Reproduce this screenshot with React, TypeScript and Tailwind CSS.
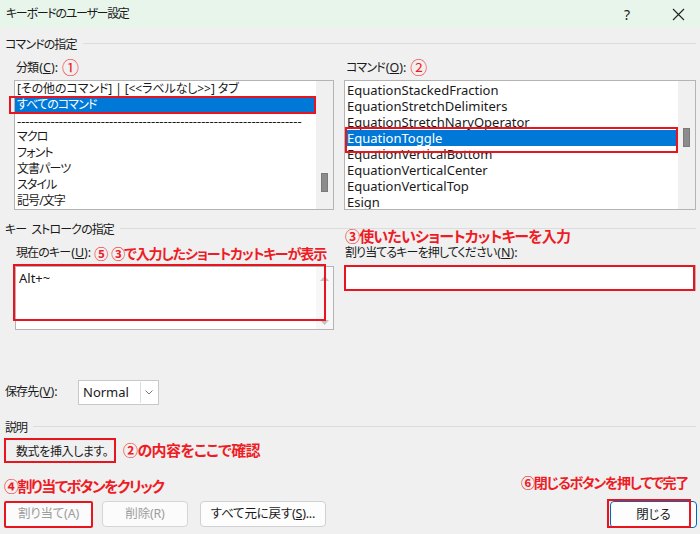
import React from "react";

const RED = "#e8141e";
const JP = "text-[12px] tracking-[-0.9px]";
const LAT = "text-[12.5px] tracking-normal";

const leftItems = [
  "[その他のコマンド] | [<<ラベルなし>>] タブ",
  "すべてのコマンド",
  "--------------------------------------------------------------------",
  "マクロ",
  "フォント",
  "文書パーツ",
  "スタイル",
  "記号/文字",
];

const rightItems = [
  "EquationStackedFraction",
  "EquationStretchDelimiters",
  "EquationStretchNaryOperator",
  "EquationToggle",
  "EquationVerticalBottom",
  "EquationVerticalCenter",
  "EquationVerticalTop",
  "Esign",
];

const Key = ({ k }: { k: string }) => (
  <span className={LAT + " ml-[1px]"}>
    (<span className="underline">{k}</span>):
  </span>
);

const GroupHeader = ({ label }: { label: React.ReactNode }) => (
  <div className="flex h-[16px] items-center">
    <span className={JP + " leading-[16px]"}>{label}</span>
    <div className="ml-[6px] mt-[-3px] h-px flex-1 bg-[#dcdcdc]" />
  </div>
);

const ListItem = ({ text, selected, cls }: { text: string; selected?: boolean; cls: string }) => (
  <div
    className={
      "h-[16px] overflow-hidden whitespace-nowrap pl-[2px] leading-[16px] " +
      cls +
      " " +
      (selected ? "mr-[2px] bg-[#0078d7] text-white" : "text-[#1a1a1a]")
    }
  >
    {text}
  </div>
);

const Annotation = ({ text, className }: { text: string; className?: string }) => (
  <span className={"whitespace-nowrap font-bold text-[#ee1c25] " + (className ?? "")}>{text}</span>
);

export default function App() {
  return (
    <div className="h-[534px] w-[700px] overflow-hidden bg-[#f0f0f0] text-[#1a1a1a] [font-family:'Noto_Sans','Noto_Sans_CJK_JP',sans-serif] [font-feature-settings:'palt']">
      {/* title bar */}
      <div className="flex h-[28px] items-center bg-[#e7f5eb] pl-[6px]">
        <span className="text-[12px] tracking-[-1.3px]">キーボードのユーザー設定</span>
        <span className="ml-auto mr-[42px] text-[14px]">?</span>
        <svg width="13" height="13" viewBox="0 0 13 13" className="mr-[15px]">
          <path d="M1 1L12 12M12 1L1 12" stroke="#222" strokeWidth="1.1" />
        </svg>
      </div>

      <div className="pl-[5px] pr-[4px] pt-[9px]">
        <GroupHeader label="コマンドの指定" />

        <div className="mt-[7px] flex gap-[10px] pl-[9px]">
          {/* category */}
          <div className="w-[320px]">
            <div className={"flex h-[16px] items-center pl-[2px] " + JP}>
              <span>
                分類<Key k="C" />
              </span>
              <span className="ml-[4px] text-[17px] tracking-normal text-[#ee1c25]">①</span>
            </div>
            <div className="relative mt-[4px] flex h-[130px] border border-[#b4b4b4] bg-white">
              <div className="min-w-0 flex-1 overflow-hidden">
                {leftItems.map((t, i) => (
                  <ListItem
                    key={i}
                    text={t}
                    selected={i === 1}
                    cls={i === 0 ? "text-[12px] tracking-[-0.1px]" : i === 2 ? "text-[13px]" : JP}
                  />
                ))}
              </div>
              <div className="w-[17px] bg-[#f0f0f0] pl-[5px] pt-[92px]">
                <div className="h-[19px] w-[7px] border border-[#7a7a7a] bg-[#8c8c8c]" />
              </div>
              <div
                className="absolute left-[-6px] top-[15px] h-[18px] w-[307px] border-2"
                style={{ borderColor: RED }}
              />
            </div>
          </div>

          {/* commands */}
          <div className="w-[352px]">
            <div className={"flex h-[16px] items-center pl-[2px] " + JP}>
              <span>
                コマンド<Key k="O" />
              </span>
              <span className="ml-[4px] text-[17px] tracking-normal text-[#ee1c25]">②</span>
            </div>
            <div className="relative mt-[4px] flex h-[130px] border border-[#b4b4b4] bg-white">
              <div className="min-w-0 flex-1 overflow-hidden pt-[1px]">
                {rightItems.map((t, i) => (
                  <ListItem key={i} text={t} selected={i === 3} cls="text-[13px]" />
                ))}
              </div>
              <div className="w-[17px] bg-[#f0f0f0] pl-[5px] pt-[47px]">
                <div className="h-[19px] w-[7px] border border-[#7a7a7a] bg-[#8c8c8c]" />
              </div>
              <div
                className="absolute left-[0px] top-[46px] h-[26px] w-[333px] border-2"
                style={{ borderColor: RED }}
              />
            </div>
          </div>
        </div>

        <div className="mt-[12px]">
          <GroupHeader
            label={
              <>
                キー<span className="inline-block w-[5px]" />ストロークの指定
              </>
            }
          />
        </div>

        <div className="mt-[7px] flex gap-[10px] pl-[9px]">
          <div className="w-[320px]">
            <div className="flex h-[16px] items-center pl-[2px]">
              <span className={JP}>
                現在のキー<Key k="U" />
              </span>
              <Annotation text="⑤" className="ml-[3px] text-[14px]" />
              <Annotation text="③で入力したショートカットキーが表示" className="ml-[3px] text-[14px] tracking-[-1.1px]" />
            </div>
            <div className="relative ml-[1px] mt-[5px] flex h-[64px] border border-[#b4b4b4] bg-white">
              <div className="flex-1 pl-[3px] pt-[3px] text-[13px] leading-[16px]">Alt+~</div>
              <div className="flex w-[17px] flex-col items-center justify-between bg-[#f7f7f7] pb-[4px] pt-[9px]">
                <svg width="9" height="5" viewBox="0 0 9 5">
                  <path d="M0 5L4.5 0L9 5Z" fill="#c2c2c2" />
                </svg>
                <svg width="9" height="5" viewBox="0 0 9 5">
                  <path d="M0 0L4.5 5L9 0Z" fill="#c2c2c2" />
                </svg>
              </div>
              <div
                className="absolute left-[-3px] top-[-3px] h-[57px] w-[313px] border-2"
                style={{ borderColor: RED }}
              />
            </div>
          </div>

          <div className="relative w-[352px]">
            <Annotation text="③使いたいショートカットキーを入力" className="absolute left-[1px] top-[-16px] text-[15px] leading-[15px] tracking-[-0.8px]" />
            <div className="flex h-[16px] items-center pl-[1px]">
              <span className={JP}>
                割り当てるキーを押してください<Key k="N" />
              </span>
            </div>
            <div className="relative mt-[4px] h-[26px] border border-[#b4b4b4] bg-white">
              <div
                className="absolute left-[-1px] top-[-1px] h-[26px] w-[351px] border-2"
                style={{ borderColor: RED }}
              />
            </div>
          </div>
        </div>

        {/* save to */}
        <div className="mt-[50px] flex h-[25px] items-center">
          <span className={JP + " w-[73px]"}>
            保存先<Key k="V" />
          </span>
          <div className="flex h-[25px] w-[81px] items-center border border-[#c8c8c8] bg-white">
            <span className="flex-1 pl-[4px] text-[13px]">Normal</span>
            <div className="mr-[1px] flex h-[21px] w-[17px] items-center justify-center border-l border-[#dedede]">
              <svg width="8" height="5" viewBox="0 0 8 5">
                <path d="M0.5 0.5L4 4L7.5 0.5" fill="none" stroke="#666" strokeWidth="0.9" />
              </svg>
            </div>
          </div>
        </div>

        <div className="mt-[15px]">
          <GroupHeader label="説明" />
        </div>

        <div className="mt-[2px] flex h-[25px] items-center">
          <div
            className="ml-[-1px] flex h-[25px] w-[112px] items-center whitespace-nowrap border-2 pl-[10px] pt-[2px] text-[12px] tracking-[-0.4px]"
            style={{ borderColor: RED }}
          >
            数式を挿入します。
          </div>
          <Annotation text="②の内容をここで確認" className="ml-[7px] text-[15px] tracking-[-0.6px]" />
        </div>

        <div className="mt-[13px] flex h-[20px] items-center">
          <Annotation text="④割り当てボタンをクリック" className="ml-[-1px] text-[15px] tracking-[-1.5px]" />
          <Annotation text="⑥閉じるボタンを押してで完了" className="ml-auto mr-[8px] mt-[-8px] text-[14px] tracking-[-1.3px]" />
        </div>

        <div className="mt-[4px] flex h-[28px] items-center">
          <button
            className="ml-[-1px] h-[27px] w-[89px] rounded-[2px] border-2 bg-[#fbfbfb] text-[12.5px] tracking-[-0.2px] text-[#9d9d9d]"
            style={{ borderColor: RED }}
          >
            割り当て(A)
          </button>
          <button className="ml-[9px] h-[26px] w-[86px] rounded-[4px] border border-[#d5d5d5] bg-[#fbfbfb] text-[12.5px] tracking-[-0.2px] text-[#9d9d9d]">
            削除(R)
          </button>
          <button className="ml-[12px] h-[26px] w-[126px] rounded-[4px] border border-[#d0d0d0] bg-[#fdfdfd] text-[12.5px] tracking-[-0.2px]">
            すべて元に戻す(<span className="underline">S</span>)...
          </button>
          <div className="relative ml-auto mr-[-1px] h-[27px] w-[87px]">
            <button className="h-[27px] w-[87px] rounded-[4px] border border-[#0067c0] bg-[#fdfdfd] text-[12.5px]">
              閉じる
            </button>
            <div
              className="absolute left-[-3px] top-[-2px] h-[29px] w-[84px] border-2"
              style={{ borderColor: RED }}
            />
          </div>
        </div>
      </div>
    </div>
  );
}
